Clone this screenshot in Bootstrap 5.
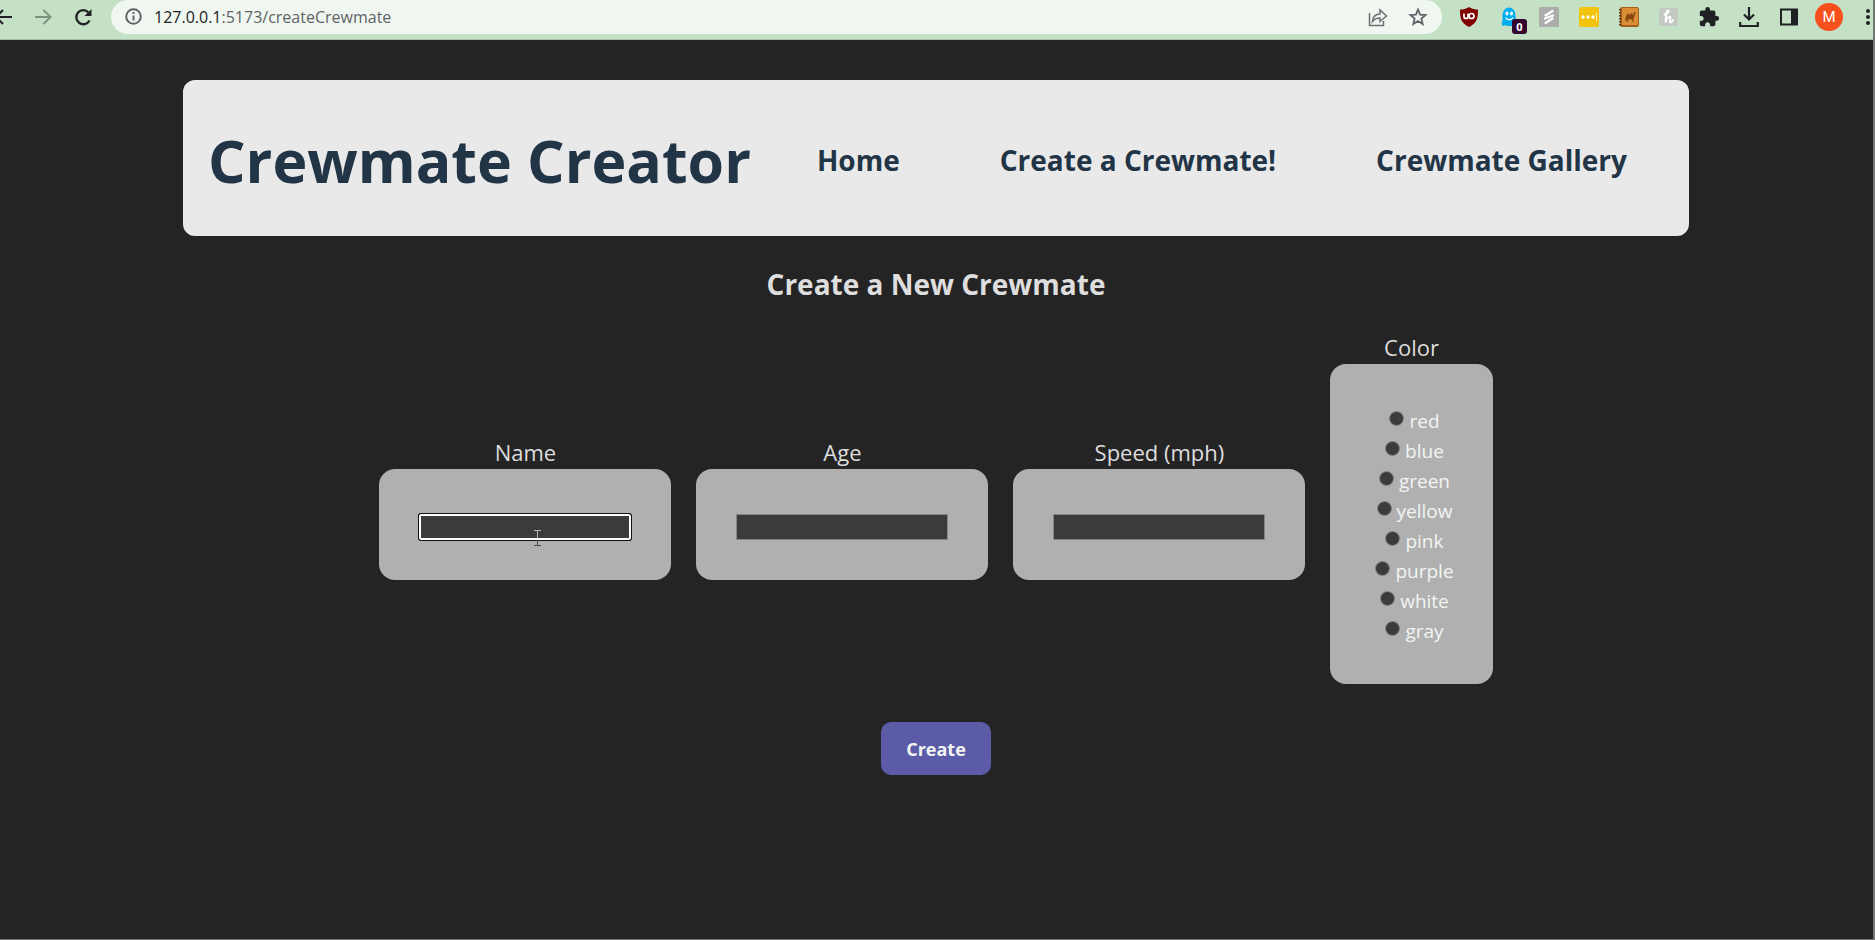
<!DOCTYPE html>
<html lang="en">
<head>
<meta charset="utf-8">
<meta name="viewport" content="width=device-width, initial-scale=1">
<title>Crewmate Creator</title>
<link href="https://cdn.jsdelivr.net/npm/bootstrap@5.3.0/dist/css/bootstrap.min.css" rel="stylesheet">
<style>
  body { background: #242424; color: #dedede; font-family: "Open Sans", "Noto Sans", sans-serif; }
  .window { min-height: 100vh; border-right: 2px solid #777; border-bottom: 1px solid #777; overflow: hidden; padding-right: 1px; }
  .browser-bar { height: 40px; background: #c5e1c5; border-bottom: 1px solid #a3bfa8; overflow: hidden; margin-right: -2px; }
  .slot { width: 40px; height: 33px; flex: none; display: flex; align-items: center; justify-content: center; background: none; border: 0; padding: 0; color: #202124; position: relative; }
  .slot.back { width: 23px; justify-content: flex-end; padding-right: 11px; }
  .slot.more { width: 25px; justify-content: flex-end; padding-right: 2px; }
  .slot svg { display: block; flex: none; }
  .omnibox { height: 34px; background: #f0f7f0; border-radius: 17px; margin: 0 7px 0 8px; padding-left: 14px; color: #5f6368; }
  .omnibox .url { font-size: 16px; line-height: 34px; }
  .omnibox .host { color: #202124; }
  .blocked { position: absolute; left: 23px; top: 19px; width: 15px; height: 15px; border-radius: 3px; background: #33052f; color: #fff; font-size: 11px; line-height: 15px; font-weight: 700; }
  .avatar { width: 28px; height: 28px; border-radius: 50%; background: #f8501d; color: #fff; font: 15px/28px Roboto, sans-serif; }
  .page { max-width: 1506px; }
  .site-header { background: #e9e9e9; border-radius: 12px; padding: 42px 62px 38px 25px; white-space: nowrap; }
  .site-header h1 { font-size: 59px; line-height: 76px; font-weight: 700; color: #213547; margin: 0; }
  .site-header a { font-size: 28px; line-height: 40px; font-weight: 700; color: #213547; text-decoration: none; }
  .site-header nav { gap: 100px; }
  .page h2 { font-size: 28px; line-height: 40px; font-weight: 700; margin: 28px 0 26px; }
  .fields { gap: 25px; }
  .field-name { display: block; font-size: 22px; line-height: 34px; margin: 0; float: none; }
  .panel { background: #b0b0b0; border-radius: 16px; padding: 45px 40px 40px; position: relative; }
  .panel input[type=text] { display: block; width: 212px; height: 26px; background: #3b3b3b; border: 1px solid #858585; color: #fff; }
  .panel input.active { border-color: #fff; border-radius: 2px; box-shadow: inset 0 0 0 1px #fff, 0 0 0 1px #101010; outline: 0; }
  .text-cursor { position: absolute; left: 155px; top: 61px; }
  .panel.colors { padding: 42px 39px 38px 45px; color: #f2f5f2; }
  .colors label { display: flex; justify-content: center; font-size: 19px; line-height: 30px; gap: 5px; }
  .colors input { appearance: none; width: 15px; height: 15px; border-radius: 50%; background: #3b3b3b; border: 1px solid #858585; margin: 5px 0 0; }
  .colors input:checked { background: #dedede; }
  .create { background: #5b5ba8; color: #f2f5f2; border: 0; border-radius: 10px; font-size: 18px; font-weight: 700; line-height: 30px; padding: 12px 25px 11px; margin-top: 38px; }
</style>
</head>
<body>
<div class="window">
  <div class="browser-bar d-flex align-items-start">
    <button class="slot back" aria-label="Back"><svg width="20" height="20" viewBox="0 0 20 20" fill="none" stroke="#202124" stroke-width="2"><path d="M20 10H4M11 3L4 10l7 7"/></svg></button>
    <button class="slot" aria-label="Forward"><svg width="20" height="20" viewBox="0 0 20 20" fill="none" stroke="#7f9183" stroke-width="2"><path d="M2 10h15M10.500 3l7 7-7 7"/></svg></button>
    <button class="slot" aria-label="Reload"><svg width="20" height="20" viewBox="0 0 20 20" fill="none" stroke="#202124" stroke-width="2.300"><path d="M16.500 13.500A7 7 0 1 1 15.500 5.500"/><path d="M18.500 2v7h-7z" fill="#202124" stroke="none"/></svg></button>
    <div class="omnibox d-flex flex-grow-1">
      <svg width="17" height="33" viewBox="0 0 17 33" fill="none" stroke="#5f6368" stroke-width="2" class="me-2 flex-shrink-0"><circle cx="8.500" cy="16.500" r="7.300"/><path d="M8.500 15.500v5M8.500 12v2"/></svg>
      <div class="url flex-grow-1 ps-1"><span class="host">127.0.0.1</span>:5173/createCrewmate</div>
      <button class="slot" aria-label="Share"><svg width="20" height="20" viewBox="0 0 20 20" fill="none" stroke="#6b6f73" stroke-width="1.500"><path d="M1.500 6v12.500H15.500V14M4.500 14.500C5 9.500 8 7 12 7V3l6.500 6-6.500 5.500V11C9 11 6.500 12 4.500 14.500z"/></svg></button>
      <button class="slot me-1" aria-label="Bookmark"><svg width="20" height="20" viewBox="0 0 20 20" fill="none" stroke="#5f6368" stroke-width="1.800"><path d="M10 2.500l2.100 5.100 5.500.400-4.200 3.600 1.300 5.400-4.700-2.900L5.300 17l1.300-5.400L2.400 8l5.500-.400z"/></svg></button>
    </div>
    <button class="slot" aria-label="Ad blocker"><svg width="20" height="20" viewBox="0 0 20 20"><path d="M10 0c3 2 6 2.500 9 2.500 0 9-1 13.500-9 17.500C2 16 1 11.500 1 2.500 4 2.500 7 2 10 0z" fill="#800000"/><path d="M5 6.500v3a2 2 0 0 0 4 0v-3" fill="none" stroke="#fff" stroke-width="1.700"/><circle cx="12.500" cy="9" r="2.500" fill="none" stroke="#fff" stroke-width="1.700"/></svg></button>
    <button class="slot" aria-label="Tracker blocker"><svg width="20" height="20" viewBox="0 0 20 20"><path d="M2.500 17l1-3V8a6.500 7.500 0 0 1 13 0v11H8.500l-1.500-1-3 1z" fill="#00aef0"/><ellipse cx="8" cy="6.500" rx="1.500" ry="2" fill="#fff"/><ellipse cx="12.500" cy="6.500" rx="1.500" ry="2" fill="#fff"/><path d="M6.500 10.500c2 3 5.500 3 7.500 0" fill="none" stroke="#fff" stroke-width="1.300"/></svg><span class="blocked">0</span></button>
    <button class="slot" aria-label="Scribe"><svg width="22" height="22" viewBox="0 0 22 22"><rect x="1" y="1" width="20" height="20" rx="1" fill="#acacac"/><path d="M7.500 9.500l7-4.500M7 12.500l8-3M7.500 17l7-4.500" stroke="#fff" stroke-width="2.300" stroke-linecap="round"/></svg></button>
    <button class="slot" aria-label="Notes"><svg width="22" height="22" viewBox="0 0 22 22"><rect x="1" y="1" width="20" height="20" rx="2" fill="#f2c40f"/><g fill="#fff"><circle cx="5" cy="11" r="1.700"/><circle cx="10" cy="11" r="1.700"/><circle cx="15" cy="11" r="1.700"/><path d="M18 7h1v8h-1z" opacity=".7"/></g></svg></button>
    <button class="slot" aria-label="Camel"><svg width="22" height="22" viewBox="0 0 22 22"><rect x="2" y="1" width="19" height="20" rx="2" fill="#a35f19"/><rect x="4" y="2" width="16" height="17" rx="1" fill="#dc8d38"/><path d="M2 3v17" stroke="#55391e" stroke-width="2" stroke-dasharray="1.500 1.500"/><path d="M7 15l1-5 2-3 1.500 2L13 7l2 2 1-3 2 .5-1 1.500-1 4-1 1 1 3h-1l-2-3h-2l-1 3H9l.5-3L8 15z" fill="#854810"/></svg></button>
    <button class="slot" aria-label="Honey"><svg width="22" height="22" viewBox="0 0 22 22"><rect x="1" y="2" width="19" height="18" rx="2" fill="#c3c8c3"/><path d="M6.500 8.500C10 8 12 4.500 10 4.500S8 10 7.500 16.500C8.500 12 12.500 9 12.500 11.500s-1.500 5 0 5 2-1.500 2.500-2.500" fill="none" stroke="#fff" stroke-width="1.800" stroke-linecap="round"/></svg></button>
    <button class="slot" aria-label="Extensions"><svg width="22" height="22" viewBox="0 0 24 24" fill="#202124"><path d="M20.500 11H19V7c0-1.100-.900-2-2-2h-4V3.500a2.500 2.500 0 0 0-5 0V5H4c-1.100 0-2 .900-2 2v3.800h1.500c1.500 0 2.700 1.200 2.700 2.700S5 16.200 3.500 16.200H2V20c0 1.100.900 2 2 2h3.800v-1.500c0-1.500 1.200-2.700 2.700-2.700s2.700 1.200 2.700 2.700V22H17c1.100 0 2-.900 2-2v-4h1.500a2.500 2.500 0 0 0 0-5z"/></svg></button>
    <button class="slot" aria-label="Downloads"><svg width="20" height="20" viewBox="0 0 20 20" fill="none" stroke="#202124" stroke-width="2.200"><path d="M10 0v12M5 7.500l5 5 5-5M1.200 15v4h17.600v-4"/></svg></button>
    <button class="slot" aria-label="Side panel"><svg width="20" height="20" viewBox="0 0 20 20"><path d="M2 2.500h16v15H2z" fill="none" stroke="#202124" stroke-width="2"/><path d="M12 2h6v16h-6z" fill="#202124"/></svg></button>
    <button class="slot" aria-label="Profile"><span class="avatar">M</span></button>
    <button class="slot more" aria-label="Menu"><svg width="8" height="20" viewBox="0 0 8 20" fill="#202124"><circle cx="4" cy="4" r="2"/><circle cx="4" cy="10" r="2"/><circle cx="4" cy="16" r="2"/></svg></button>
  </div>

  <div class="page mx-auto pt-4 text-center">
    <header class="site-header d-flex align-items-center justify-content-between mt-3">
      <h1>Crewmate Creator</h1>
      <nav class="d-flex">
        <a href="#home">Home</a>
        <a href="#create">Create a Crewmate!</a>
        <a href="#gallery">Crewmate Gallery</a>
      </nav>
    </header>

    <h2>Create a New Crewmate</h2>

    <form onsubmit="return false">
      <div class="fields d-flex justify-content-center align-items-center">
        <div>
          <label class="field-name" for="name">Name</label>
          <div class="panel">
            <input type="text" id="name" class="active">
            <svg class="text-cursor" width="7" height="17" viewBox="0 0 7 17" fill="none" stroke-width="1"><path d="M0 .5h7M3.500 1v7" stroke="#b5b5b5"/><path d="M3.500 10v6M0 15.500h7" stroke="#4a4a4a"/></svg>
          </div>
        </div>
        <div>
          <label class="field-name" for="age">Age</label>
          <div class="panel"><input type="text" id="age"></div>
        </div>
        <div>
          <label class="field-name" for="speed">Speed (mph)</label>
          <div class="panel"><input type="text" id="speed"></div>
        </div>
        <fieldset>
          <legend class="field-name">Color</legend>
          <div class="panel colors">
            <label><input type="radio" name="color" value="red">red</label>
            <label><input type="radio" name="color" value="blue">blue</label>
            <label><input type="radio" name="color" value="green">green</label>
            <label><input type="radio" name="color" value="yellow">yellow</label>
            <label><input type="radio" name="color" value="pink">pink</label>
            <label><input type="radio" name="color" value="purple">purple</label>
            <label><input type="radio" name="color" value="white">white</label>
            <label><input type="radio" name="color" value="gray">gray</label>
          </div>
        </fieldset>
      </div>
      <button class="create" type="submit">Create</button>
    </form>
  </div>
</div>
<script src="https://cdn.jsdelivr.net/npm/bootstrap@5.3.0/dist/js/bootstrap.bundle.min.js"></script>
</body>
</html>
